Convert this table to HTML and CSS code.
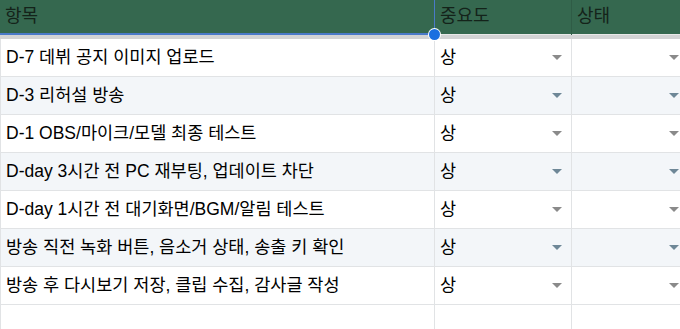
FILE: index.html
```html
<!DOCTYPE html>
<html lang="ko">
<head>
<meta charset="utf-8">
<link rel="stylesheet" href="styles.css">
</head>
<body>
<div class="sheet">
  <div class="head">
    <div class="hcell first">항목<span class="dot"></span></div>
    <div class="hcell">중요도</div>
    <div class="hcell">상태</div>
  </div>
  <div class="freeze"></div>
  <div class="row"><div class="cell">D-7 데뷔 공지 이미지 업로드</div><div class="cell sel">상<span class="arr"></span></div><div class="cell sel"><span class="arr"></span></div></div>
  <div class="row alt"><div class="cell">D-3 리허설 방송</div><div class="cell sel">상<span class="arr"></span></div><div class="cell sel"><span class="arr"></span></div></div>
  <div class="row"><div class="cell">D-1 OBS/마이크/모델 최종 테스트</div><div class="cell sel">상<span class="arr"></span></div><div class="cell sel"><span class="arr"></span></div></div>
  <div class="row alt"><div class="cell">D-day 3시간 전 PC 재부팅, 업데이트 차단</div><div class="cell sel">상<span class="arr"></span></div><div class="cell sel"><span class="arr"></span></div></div>
  <div class="row"><div class="cell">D-day 1시간 전 대기화면/BGM/알림 테스트</div><div class="cell sel">상<span class="arr"></span></div><div class="cell sel"><span class="arr"></span></div></div>
  <div class="row alt"><div class="cell">방송 직전 녹화 버튼, 음소거 상태, 송출 키 확인</div><div class="cell sel">상<span class="arr"></span></div><div class="cell sel"><span class="arr"></span></div></div>
  <div class="row"><div class="cell">방송 후 다시보기 저장, 클립 수집, 감사글 작성</div><div class="cell sel">상<span class="arr"></span></div><div class="cell sel"><span class="arr"></span></div></div>
  <div class="row"><div class="cell"></div><div class="cell"></div><div class="cell"></div></div>
</div>
</body>
</html>
```

FILE: styles.css
```css
html, body {
  margin: 0;
  padding: 0;
  background: #ffffff;
  overflow: hidden;
}
.sheet {
  width: 692px;
  font-family: "Liberation Sans", "Noto Sans CJK KR", sans-serif;
  color: #000;
}
.head {
  display: grid;
  grid-template-columns: 435px 137px 120px;
  height: 34px;
  background: #35684f;
}
.hcell {
  position: relative;
  box-sizing: border-box;
  border-right: 1px solid #2f5c46;
  padding-left: 5px;
  font-size: 18px;
  line-height: 33px;
  color: #14231a;
}
.hcell.first {
  border-bottom: 2px solid #4a7ac8;
  border-right: 1px solid #4a7ac8;
}
.dot {
  position: absolute;
  right: -6px;
  bottom: -7px;
  width: 11px;
  height: 11px;
  border-radius: 50%;
  background: #1a6fe0;
  box-shadow: 0 0 0 1px #ffffff;
  z-index: 2;
}
.freeze {
  height: 5px;
  background: #d2d3d4;
  border-top: 1px solid #e8e8e8;
  box-sizing: border-box;
}
.row {
  display: grid;
  grid-template-columns: 435px 137px 120px;
  height: 38px;
  box-sizing: border-box;
  border-bottom: 1px solid #e1e3e5;
  background: #ffffff;
}
.row.alt {
  background: #f3f6f9;
}
.cell {
  position: relative;
  box-sizing: border-box;
  border-right: 1px solid #e1e3e5;
  padding-left: 5px;
  font-size: 17.5px;
  line-height: 37px;
  white-space: nowrap;
}
.cell:first-child {
  border-left: 1px solid #e1e3e5;
}
.arr {
  position: absolute;
  right: 9px;
  top: 16px;
  width: 0;
  height: 0;
  border-left: 5px solid transparent;
  border-right: 5px solid transparent;
  border-top: 5px solid #8a8a8a;
}
.row.alt .arr {
  border-top-color: #6e8797;
}
.cell.sel:last-child .arr {
  right: 12px;
}
```
